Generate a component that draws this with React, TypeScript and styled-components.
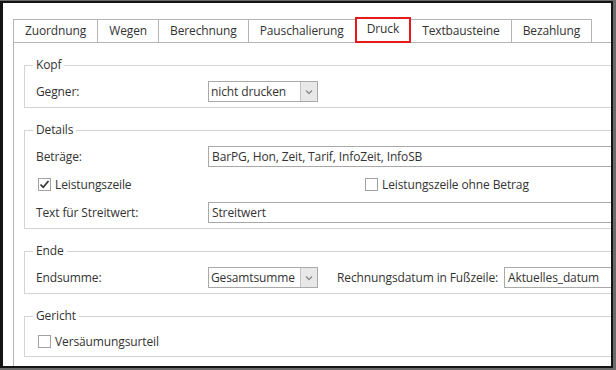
import React from 'react';
import styled, { createGlobalStyle } from 'styled-components';

const GlobalStyle = createGlobalStyle`
  html, body {
    margin: 0;
    padding: 0;
    background: #ffffff;
  }
  body {
    font-family: 'Open Sans', 'Liberation Sans', sans-serif;
    font-size: 12px;
    letter-spacing: -0.12px;
    color: #333333;
  }
`;

const Frame = styled.div`
  width: 616px;
  height: 370px;
  box-sizing: border-box;
  border-top: 1px solid #6b6b6b;
  border-right: 3px solid #6b6b6b;
  border-bottom: 2px solid #6b6b6b;
`;

const Window = styled.div`
  height: 100%;
  box-sizing: border-box;
  border: 2px solid #151515;
  border-left-width: 3px;
  background: #ffffff;
  overflow: hidden;
  padding: 14px 0 0 10px;
  display: flex;
  flex-direction: column;
`;

const TabBar = styled.div`
  display: flex;
  align-items: flex-end;
  width: 640px;
  height: 26px;
  box-sizing: border-box;
  border-bottom: 1px solid #b4b4b4;
  padding-left: 1px;
`;

const Tab = styled.div<{ $active?: boolean }>`
  box-sizing: border-box;
  height: ${(p) => (p.$active ? '26px' : '23px')};
  margin-left: -1px;
  margin-bottom: ${(p) => (p.$active ? '-1px' : '0')};
  padding: ${(p) => (p.$active ? '0 10px 2px' : '0 11px')};
  border: ${(p) => (p.$active ? '2px solid #e3191c' : '1px solid #b4b4b4')};
  border-bottom: ${(p) => (p.$active ? '2px solid #e3191c' : 'none')};
  background: #ffffff;
  display: flex;
  align-items: center;
  line-height: 16px;
  color: #333333;
  white-space: nowrap;
  position: relative;
  z-index: ${(p) => (p.$active ? 1 : 0)};
`;

const Panel = styled.div`
  flex: 1;
  width: 640px;
  border-left: 1px solid #b4b4b4;
  padding: 14px 0 0 10px;
  display: flex;
  flex-direction: column;
  gap: 14px;
`;

const Group = styled.fieldset`
  margin: 0;
  width: 606px;
  box-sizing: border-box;
  min-width: 0;
  border: 1px solid #d4d4d4;
  padding: 8px 11px 5px;
`;

const Legend = styled.legend`
  padding: 0 3px;
  margin-left: -3px;
  line-height: 16px;
  color: #333333;
`;

const Rows = styled.div`
  display: flex;
  flex-direction: column;
  gap: 7px;
`;

const Row = styled.div<{ $height?: number }>`
  display: flex;
  align-items: center;
  height: ${(p) => p.$height ?? 21}px;
`;

const CheckRow = styled.div<{ $height?: number }>`
  display: grid;
  grid-template-columns: 327px 1fr;
  align-items: center;
  height: ${(p) => p.$height ?? 21}px;
`;

const Label = styled.span`
  width: 172px;
  flex-shrink: 0;
  white-space: nowrap;
`;

const InlineLabel = styled.span`
  margin: 0 6px 0 19px;
  white-space: nowrap;
`;

const TextInput = styled.div`
  flex: 1;
  height: 21px;
  box-sizing: border-box;
  border: 1px solid #a9a9a9;
  padding: 0 3px;
  display: flex;
  align-items: center;
  white-space: nowrap;
  overflow: hidden;
`;

const Select = styled.div`
  width: 110px;
  height: 21px;
  box-sizing: border-box;
  border: 1px solid #a9a9a9;
  display: flex;
  flex-shrink: 0;
`;

const SelectValue = styled.span`
  flex: 1;
  padding-left: 2px;
  display: flex;
  align-items: center;
  white-space: nowrap;
  overflow: hidden;
`;

const SelectButton = styled.span`
  width: 16px;
  background: #e8e8e8;
  border-left: 1px solid #c2c2c2;
  display: flex;
  align-items: center;
  justify-content: center;
`;

const CheckItem = styled.label`
  display: flex;
  align-items: center;
  gap: 4px;
  padding-left: 2px;
  white-space: nowrap;
`;

const Box = styled.span`
  width: 13px;
  height: 13px;
  box-sizing: border-box;
  border: 1px solid #a2a2a2;
  background: #ffffff;
  display: flex;
  align-items: center;
  justify-content: center;
`;

const Chevron = () => (
  <svg width="8" height="6" viewBox="0 0 8 6">
    <polyline points="1,1.5 4,4.5 7,1.5" fill="none" stroke="#8a8a8a" strokeWidth="1.3" />
  </svg>
);

const Checkbox: React.FC<{ checked?: boolean; label: string }> = ({ checked, label }) => (
  <CheckItem>
    <Box>
      {checked && (
        <svg width="11" height="11" viewBox="0 0 11 11">
          <polyline points="1.5,5.5 4.2,8.3 9.5,2" fill="none" stroke="#333" strokeWidth="1.7" />
        </svg>
      )}
    </Box>
    {label}
  </CheckItem>
);

const Dropdown: React.FC<{ value: string }> = ({ value }) => (
  <Select>
    <SelectValue>{value}</SelectValue>
    <SelectButton>
      <Chevron />
    </SelectButton>
  </Select>
);

const tabs = ['Zuordnung', 'Wegen', 'Berechnung', 'Pauschalierung', 'Druck', 'Textbausteine', 'Bezahlung'];

const App: React.FC = () => {
  return (
    <>
      <GlobalStyle />
      <Frame>
        <Window>
          <TabBar>
            {tabs.map((t) => (
              <Tab key={t} $active={t === 'Druck'}>
                {t}
              </Tab>
            ))}
          </TabBar>
          <Panel>
            <Group>
              <Legend>Kopf</Legend>
              <Rows>
                <Row>
                  <Label>Gegner:</Label>
                  <Dropdown value="nicht drucken" />
                </Row>
              </Rows>
            </Group>

            <Group>
              <Legend>Details</Legend>
              <Rows>
                <Row>
                  <Label>Beträge:</Label>
                  <TextInput>BarPG, Hon, Zeit, Tarif, InfoZeit, InfoSB</TextInput>
                </Row>
                <CheckRow>
                  <Checkbox checked label="Leistungszeile" />
                  <Checkbox label="Leistungszeile ohne Betrag" />
                </CheckRow>
                <Row>
                  <Label>Text für Streitwert:</Label>
                  <TextInput>Streitwert</TextInput>
                </Row>
              </Rows>
            </Group>

            <Group>
              <Legend>Ende</Legend>
              <Rows>
                <Row>
                  <Label>Endsumme:</Label>
                  <Dropdown value="Gesamtsumme" />
                  <InlineLabel>Rechnungsdatum in Fußzeile:</InlineLabel>
                  <TextInput>Aktuelles_datum</TextInput>
                </Row>
              </Rows>
            </Group>

            <Group>
              <Legend>Gericht</Legend>
              <Rows>
                <CheckRow $height={19}>
                  <Checkbox label="Versäumungsurteil" />
                </CheckRow>
              </Rows>
            </Group>
          </Panel>
        </Window>
      </Frame>
    </>
  );
};

export default App;
